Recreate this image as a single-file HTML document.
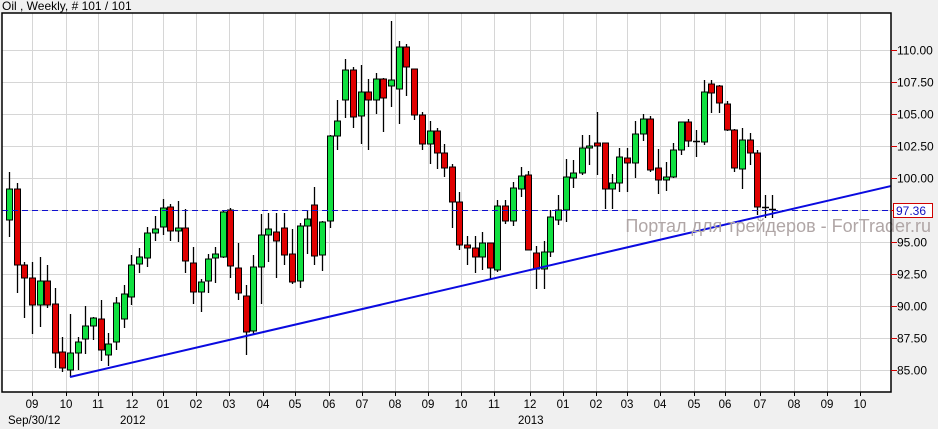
<!DOCTYPE html>
<html><head><meta charset="utf-8"><style>
html,body{margin:0;padding:0;background:#f0f0f0;}
svg{display:block;font-family:"Liberation Sans",sans-serif;}
</style></head><body>
<svg id="s" width="938" height="429" xmlns="http://www.w3.org/2000/svg">
<rect x="0" y="0" width="938" height="429" fill="#f0f0f0"/>
<rect x="2" y="13" width="889" height="379" fill="#fff"/>
<g id="grid" stroke="#d6d6d6" stroke-width="1"></g>
<g id="c"></g>
<line x1="2" y1="210.5" x2="891" y2="210.5" stroke="#1010d0" stroke-width="1" stroke-dasharray="6,4"/>
<line x1="70" y1="377" x2="891" y2="186" stroke="#0a0ae0" stroke-width="2"/>
<text x="931" y="232" text-anchor="end" font-size="18" fill="#b0a6a6">Портал для трейдеров - ForTrader.ru</text>
<rect x="2" y="13" width="889" height="379" fill="none" stroke="#000" stroke-width="1.5"/>
<g id="ax" font-size="12" fill="#000"></g>
<rect x="893.5" y="203.5" width="39" height="14" fill="#fff" stroke="#d00000"/>
<text x="896" y="215" font-size="12" fill="#1010c0">97.36</text>
<text x="2" y="10" font-size="12" fill="#000">Oil , Weekly, # 101 / 101</text>
<text x="8" y="424" font-size="11.5">Sep/30/12</text>
<text x="120" y="424" font-size="11.5">2012</text>
<text x="518" y="424" font-size="11.5">2013</text>
</svg>
<script>
var NS="http://www.w3.org/2000/svg";
function el(p,t,a,txt){var e=document.createElementNS(NS,t);for(var k in a)e.setAttribute(k,a[k]);if(txt)e.textContent=txt;p.appendChild(e);return e;}
var g=document.getElementById('grid'),ax=document.getElementById('ax'),c=document.getElementById('c');
var months=[[32,'09'],[66,'10'],[98,'11'],[132,'12'],[163,'01'],[196,'02'],[229,'03'],[263,'04'],[295,'05'],[329,'06'],[362,'07'],[395,'08'],[428,'09'],[461,'10'],[494,'11'],[530,'12'],[563,'01'],[596,'02'],[627,'03'],[660,'04'],[694,'05'],[725,'06'],[760,'07'],[794,'08'],[827,'09'],[860,'10']];
months.forEach(function(m){el(g,'line',{x1:m[0]+.5,x2:m[0]+.5,y1:13,y2:392});el(ax,'text',{x:m[0],y:408,'text-anchor':'middle','font-size':11.5},m[1]);el(ax,'line',{x1:m[0]+.5,x2:m[0]+.5,y1:392,y2:396,stroke:'#000'});});
var pr=['110.00','107.50','105.00','102.50','100.00','97.50','95.00','92.50','90.00','87.50','85.00'];
pr.forEach(function(p,i){var y=50+i*32;el(g,'line',{x1:2,x2:891,y1:y+.5,y2:y+.5});el(ax,'line',{x1:891,x2:897,y1:y+.5,y2:y+.5,stroke:'#d00000'});if(p!='97.50')el(ax,'text',{x:897,y:y+4.5},p);});
var d=[[9,172,237,189,220,1],[17,183,293,189,265,0],[24,262,318,265,278,0],[32,262,334,278,305,0],[40,257,327,281,305,1],[47,265,308,281,305,0],[55,288,368,304,353,0],[62,337,372,352,368,0],[70,314,377,353,370,1],[78,337,370,342,353,1],[85,306,354,326,339,1],[93,317,340,318,326,1],[101,300,361,319,350,0],[108,333,366,344,355,1],[116,297,350,303,342,1],[124,285,328,294,319,1],[131,255,305,265,297,1],[139,248,273,257,264,1],[147,227,267,233,258,1],[155,216,241,229,233,1],[163,199,235,208,227,1],[170,204,241,207,231,0],[178,201,242,228,231,1],[185,209,273,228,261,0],[193,247,304,263,292,0],[201,279,312,282,292,1],[208,254,293,259,281,1],[215,247,283,254,258,1],[223,211,258,212,257,1],[230,208,278,210,266,0],[238,243,300,268,293,0],[246,285,355,296,332,0],[253,255,335,267,331,1],[261,214,304,235,267,1],[268,213,262,229,235,1],[276,213,278,232,241,0],[284,213,265,228,255,0],[292,229,284,254,282,0],[300,223,288,226,281,1],[307,210,254,219,226,1],[314,187,265,205,256,0],[322,221,271,222,255,1],[330,135,228,136,221,1],[337,100,150,121,136,1],[345,59,118,70,100,1],[353,67,128,70,117,0],[361,65,144,92,116,1],[368,79,150,92,100,0],[376,73,114,79,100,1],[383,78,132,79,98,0],[391,21,107,80,86,1],[399,41,124,47,89,1],[406,44,96,47,67,0],[414,69,120,69,115,0],[422,112,150,115,144,0],[430,121,164,131,144,1],[437,128,169,131,153,0],[444,144,177,153,168,0],[452,164,228,167,202,0],[459,192,250,202,245,0],[467,236,265,245,248,0],[475,236,273,248,257,0],[482,232,270,243,257,1],[490,243,280,243,268,0],[497,200,272,206,270,1],[505,200,224,206,221,0],[513,182,226,188,221,1],[521,167,197,176,189,1],[528,171,250,175,250,0],[536,246,289,253,269,0],[544,241,289,252,269,1],[550,210,257,217,252,1],[558,195,225,210,220,1],[566,159,222,177,210,1],[573,160,188,173,178,1],[582,135,175,148,173,1],[589,135,165,146,148,1],[597,112,175,143,146,0],[605,143,209,143,189,0],[612,174,209,183,189,1],[619,148,192,157,183,1],[627,148,192,158,163,0],[635,121,178,134,163,1],[643,114,141,119,134,1],[650,116,172,119,170,0],[658,149,194,168,180,0],[666,162,191,177,180,1],[673,143,178,150,177,1],[681,122,155,122,150,1],[688,119,147,122,141,0],[696,130,157,141,142,2],[704,80,145,92,142,1],[711,80,113,84,93,0],[719,85,113,86,103,0],[727,101,131,104,130,0],[734,129,172,130,168,0],[742,128,189,140,169,1],[750,133,165,140,153,0],[757,150,215,153,207,0],[765,195,218,207,208,2],[772,195,218,209,210,2]];
d.forEach(function(k){var x=k[0];el(c,'line',{x1:x+.5,x2:x+.5,y1:k[1],y2:k[2],stroke:'#000','stroke-width':1.3});
if(k[5]==2){el(c,'line',{x1:x-3,x2:x+4,y1:k[3]+.5,y2:k[3]+.5,stroke:'#000','stroke-width':1.5});return;}
var h=Math.max(2,k[4]-k[3]);el(c,'rect',{x:x-2.5,y:k[3],width:6,height:h,fill:k[5]?'#10e040':'#e00000',stroke:'#000','stroke-width':1});});
</script>
</body></html>
